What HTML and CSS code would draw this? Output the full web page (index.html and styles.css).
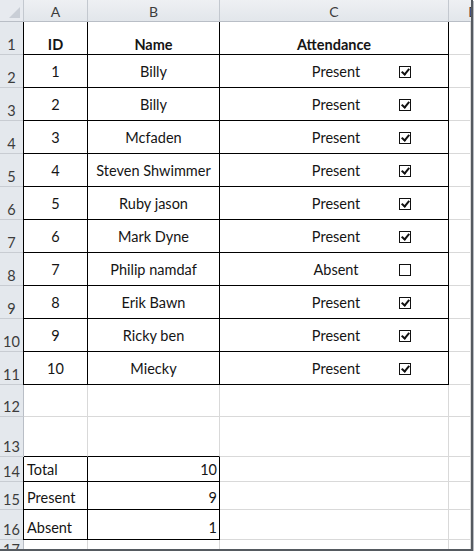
FILE: index.html
```html
<!DOCTYPE html>
<html>
<head>
<meta charset="utf-8">
<link rel="stylesheet" href="styles.css">
</head>
<body>
<div class="frame">
  <div class="sheet">
    <div class="corner"><span class="tri"></span></div>
    <div class="ch">A</div>
    <div class="ch">B</div>
    <div class="ch">C</div>
    <div class="ch chd">D</div>

    <div class="rh">1</div>
    <div class="c t tl bold bot">ID</div>
    <div class="c t bold bot">Name</div>
    <div class="c t bold bot">Attendance</div>
    <div class="c"></div>

    <div class="rh">2</div><div class="c t tl">1</div><div class="c t">Billy</div><div class="c t att">Present<span class="cb on"></span></div><div class="c"></div>
    <div class="rh">3</div><div class="c t tl">2</div><div class="c t">Billy</div><div class="c t att">Present<span class="cb on"></span></div><div class="c"></div>
    <div class="rh">4</div><div class="c t tl">3</div><div class="c t">Mcfaden</div><div class="c t att">Present<span class="cb on"></span></div><div class="c"></div>
    <div class="rh">5</div><div class="c t tl">4</div><div class="c t">Steven Shwimmer</div><div class="c t att">Present<span class="cb on"></span></div><div class="c"></div>
    <div class="rh">6</div><div class="c t tl">5</div><div class="c t">Ruby jason</div><div class="c t att">Present<span class="cb on"></span></div><div class="c"></div>
    <div class="rh">7</div><div class="c t tl">6</div><div class="c t">Mark Dyne</div><div class="c t att">Present<span class="cb on"></span></div><div class="c"></div>
    <div class="rh">8</div><div class="c t tl">7</div><div class="c t">Philip namdaf</div><div class="c t att">Absent<span class="cb"></span></div><div class="c"></div>
    <div class="rh">9</div><div class="c t tl">8</div><div class="c t">Erik Bawn</div><div class="c t att">Present<span class="cb on"></span></div><div class="c"></div>
    <div class="rh">10</div><div class="c t tl">9</div><div class="c t">Ricky ben</div><div class="c t att">Present<span class="cb on"></span></div><div class="c"></div>
    <div class="rh">11</div><div class="c t tl">10</div><div class="c t">Miecky</div><div class="c t att">Present<span class="cb on"></span></div><div class="c"></div>

    <div class="rh">12</div><div class="c"></div><div class="c"></div><div class="c"></div><div class="c"></div>
    <div class="rh">13</div><div class="c bb"></div><div class="c bb"></div><div class="c"></div><div class="c"></div>

    <div class="rh">14</div><div class="c s sl">Total</div><div class="c s sr">10</div><div class="c"></div><div class="c"></div>
    <div class="rh">15</div><div class="c s sl">Present</div><div class="c s sr">9</div><div class="c"></div><div class="c"></div>
    <div class="rh">16</div><div class="c s sl">Absent</div><div class="c s sr">1</div><div class="c"></div><div class="c"></div>
    <div class="rh">17</div><div class="c"></div><div class="c"></div><div class="c"></div><div class="c"></div>
  </div>
</div>
</body>
</html>
```
FILE: styles.css
```css
html, body {
  margin: 0;
  padding: 0;
  background: #ffffff;
}
body {
  font-family: "Lato", "Open Sans", sans-serif;
  font-size: 14.5px;
  color: #151515;
}
.frame {
  width: 471px;
  height: 549px;
  border-right: 2px solid #555a60;
  border-bottom: 2px solid #555a60;
  box-shadow: 1px 1px 0 #b8bcc2;
  overflow: hidden;
}
.sheet {
  display: grid;
  grid-template-columns: 24px 64px 132px 229px 22px;
  grid-template-rows: 22px 33px repeat(10, 33px) 32px 40px 25px 28px 30px 20px;
}
.sheet > div {
  box-sizing: border-box;
  border-right: 1px solid #d9d9d9;
  border-bottom: 1px solid #d9d9d9;
  min-width: 0;
  position: relative;
}
.corner {
  background: #e7eaef;
  border-right-color: #c3c8cf !important;
  border-bottom-color: #b9bec6 !important;
}
.tri {
  position: absolute;
  right: 3px;
  bottom: 3px;
  width: 0;
  height: 0;
  border-left: 11px solid transparent;
  border-bottom: 11px solid #c9ced6;
}
.ch {
  background: linear-gradient(#eef0f3, #e2e6eb);
  border-right-color: #c3c8cf !important;
  border-bottom-color: #b9bec6 !important;
  color: #3c3c3c;
  display: flex;
  align-items: center;
  justify-content: center;
  font-size: 14px;
  padding-top: 1px;
}
.chd {
  justify-content: flex-end;
  margin-right: -8px;
  border-right: none !important;
  overflow: hidden;
}
.rh {
  background: #e4e8ed;
  border-right-color: #b9bec6 !important;
  border-bottom-color: #c8ccd2 !important;
  color: #3c3c3c;
  font-size: 14.5px;
  line-height: 16px;
  display: flex;
  align-items: flex-end;
  justify-content: center;
  padding-bottom: 1px;
}
.c.t {
  display: flex;
  align-items: center;
  justify-content: center;
  border-right-color: #000 !important;
  border-bottom-color: #000 !important;
  padding-top: 1px;
}
.c.t.tl {
  border-left: 1px solid #000;
  margin-left: -1px;
}
.bold {
  font-weight: 700;
}
.c.bot {
  align-items: flex-end;
  padding-bottom: 1px;
}
.att {
  padding-left: 4px;
}
.cb {
  position: absolute;
  left: 179px;
  top: 11px;
  width: 12px;
  height: 12px;
  box-sizing: border-box;
  border: 1px solid #111;
  background: #fff;
}
.cb.on::after {
  content: "";
  position: absolute;
  left: 3px;
  top: 0px;
  width: 3px;
  height: 6px;
  border-right: 2.5px solid #111;
  border-bottom: 2.5px solid #111;
  transform: rotate(40deg);
}
.bb {
  border-bottom-color: #000 !important;
}
.c.s {
  display: flex;
  align-items: flex-end;
  padding-bottom: 3px;
  border-right-color: #000 !important;
  border-bottom-color: #000 !important;
}
.c.sl {
  padding-left: 3px;
  border-left: 1px solid #000;
  margin-left: -1px;
}
.c.sr {
  justify-content: flex-end;
  padding-right: 2px;
}
```
